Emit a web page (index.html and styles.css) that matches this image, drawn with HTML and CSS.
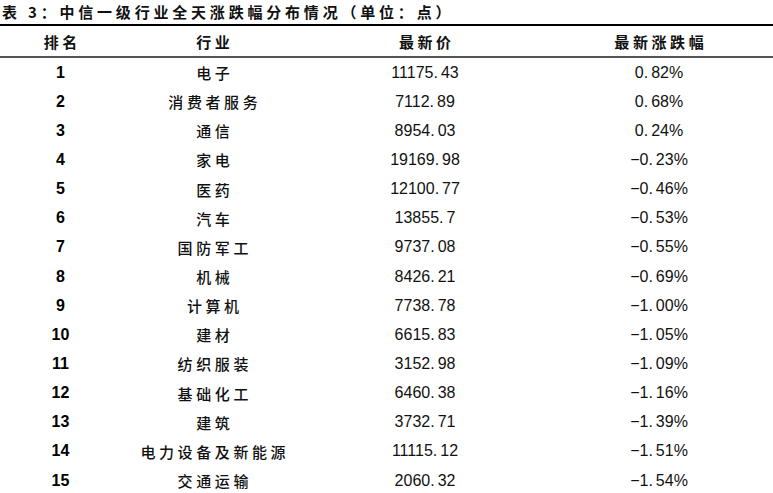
FILE: index.html
```html
<!DOCTYPE html>
<html lang="zh">
<head>
<meta charset="utf-8">
<link rel="stylesheet" href="styles.css">
</head>
<body>
<div class="title">表 3：中信一级行业全天涨跌幅分布情况（单位：点）</div>
<div class="table">
  <div class="row head">
    <div class="c c1 cjk">排名</div>
    <div class="c c2 cjk">行业</div>
    <div class="c c3 cjk">最新价</div>
    <div class="c c4 cjk">最新涨跌幅</div>
  </div>
  <div class="row"><div class="c c1 rank">1</div><div class="c c2 cjk">电子</div><div class="c c3 num">11175<span class="dot">.</span>43</div><div class="c c4 num">0<span class="dot">.</span>82%</div></div>
  <div class="row"><div class="c c1 rank">2</div><div class="c c2 cjk">消费者服务</div><div class="c c3 num">7112<span class="dot">.</span>89</div><div class="c c4 num">0<span class="dot">.</span>68%</div></div>
  <div class="row"><div class="c c1 rank">3</div><div class="c c2 cjk">通信</div><div class="c c3 num">8954<span class="dot">.</span>03</div><div class="c c4 num">0<span class="dot">.</span>24%</div></div>
  <div class="row"><div class="c c1 rank">4</div><div class="c c2 cjk">家电</div><div class="c c3 num">19169<span class="dot">.</span>98</div><div class="c c4 num">−0<span class="dot">.</span>23%</div></div>
  <div class="row"><div class="c c1 rank">5</div><div class="c c2 cjk">医药</div><div class="c c3 num">12100<span class="dot">.</span>77</div><div class="c c4 num">−0<span class="dot">.</span>46%</div></div>
  <div class="row"><div class="c c1 rank">6</div><div class="c c2 cjk">汽车</div><div class="c c3 num">13855<span class="dot">.</span>7</div><div class="c c4 num">−0<span class="dot">.</span>53%</div></div>
  <div class="row"><div class="c c1 rank">7</div><div class="c c2 cjk">国防军工</div><div class="c c3 num">9737<span class="dot">.</span>08</div><div class="c c4 num">−0<span class="dot">.</span>55%</div></div>
  <div class="row"><div class="c c1 rank">8</div><div class="c c2 cjk">机械</div><div class="c c3 num">8426<span class="dot">.</span>21</div><div class="c c4 num">−0<span class="dot">.</span>69%</div></div>
  <div class="row"><div class="c c1 rank">9</div><div class="c c2 cjk">计算机</div><div class="c c3 num">7738<span class="dot">.</span>78</div><div class="c c4 num">−1<span class="dot">.</span>00%</div></div>
  <div class="row"><div class="c c1 rank">10</div><div class="c c2 cjk">建材</div><div class="c c3 num">6615<span class="dot">.</span>83</div><div class="c c4 num">−1<span class="dot">.</span>05%</div></div>
  <div class="row"><div class="c c1 rank">11</div><div class="c c2 cjk">纺织服装</div><div class="c c3 num">3152<span class="dot">.</span>98</div><div class="c c4 num">−1<span class="dot">.</span>09%</div></div>
  <div class="row"><div class="c c1 rank">12</div><div class="c c2 cjk">基础化工</div><div class="c c3 num">6460<span class="dot">.</span>38</div><div class="c c4 num">−1<span class="dot">.</span>16%</div></div>
  <div class="row"><div class="c c1 rank">13</div><div class="c c2 cjk">建筑</div><div class="c c3 num">3732<span class="dot">.</span>71</div><div class="c c4 num">−1<span class="dot">.</span>39%</div></div>
  <div class="row"><div class="c c1 rank">14</div><div class="c c2 cjk">电力设备及新能源</div><div class="c c3 num">11115<span class="dot">.</span>12</div><div class="c c4 num">−1<span class="dot">.</span>51%</div></div>
  <div class="row"><div class="c c1 rank">15</div><div class="c c2 cjk">交通运输</div><div class="c c3 num">2060<span class="dot">.</span>32</div><div class="c c4 num">−1<span class="dot">.</span>54%</div></div>
</div>
</body>
</html>
```
FILE: styles.css
```css
html, body {
  margin: 0;
  padding: 0;
  background: #ffffff;
  color: #111111;
}
body {
  width: 773px;
  font-family: "Liberation Sans", Arial, "Noto Sans CJK SC", sans-serif;
}
.title {
  height: 24px;
  line-height: 24px;
  padding-left: 2px;
  font-family: "Noto Sans CJK SC", sans-serif;
  font-weight: 700;
  font-size: 15px;
  letter-spacing: 3.8px;
  color: #111111;
  white-space: nowrap;
}
.table {
  border-top: 2px solid #000000;
}
.row {
  display: grid;
  grid-template-columns: 121px 184px 240px 228px;
  height: 29.15px;
  align-items: center;
}
.row.head {
  height: 32px;
  border-bottom: 2px solid #555555;
  box-sizing: border-box;
  font-weight: 700;
}
.c {
  text-align: center;
  white-space: nowrap;
}
.cjk {
  font-family: "Noto Sans CJK SC", sans-serif;
  font-size: 15px;
  font-weight: 500;
  letter-spacing: 3.6px;
  padding-left: 3.6px;
  color: #111111;
}
.row.head .cjk {
  font-weight: 700;
}
.rank {
  font-weight: 700;
  font-size: 16px;
  color: #000;
}
.num {
  font-size: 16px;
  color: #111;
}
.dot {
  margin-right: 3px;
}
```
